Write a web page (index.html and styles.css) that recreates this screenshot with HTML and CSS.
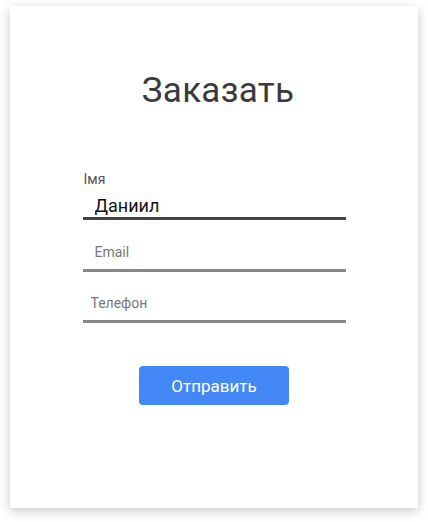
FILE: index.html
```html
<!DOCTYPE html>
<html lang="ru">
<head>
<meta charset="utf-8">
<title>Заказать</title>
<link rel="stylesheet" href="styles.css">
</head>
<body>
<main class="card">
  <h1 class="title">Заказать</h1>
  <form class="form">
    <label class="label" for="name">Імя</label>
    <input class="field field-active" id="name" type="text" value="Даниил">
    <input class="field field-email" type="email" placeholder="Email">
    <input class="field field-phone" type="tel" placeholder="Телефон">
    <div class="actions">
      <button class="submit" type="button">Отправить</button>
    </div>
  </form>
</main>
</body>
</html>
```

FILE: styles.css
```css
html, body {
  margin: 0;
  padding: 0;
  background: #fff;
}
body {
  font-family: Roboto, "Noto Sans", Arial, sans-serif;
  padding: 6px 10px 14px;
}
.card {
  box-sizing: border-box;
  width: 408px;
  height: 502px;
  background: #fff;
  box-shadow: 0 3px 10px rgba(0, 0, 0, 0.22);
  padding-top: 64px;
}
.title {
  margin: 0;
  padding-left: 8px;
  text-align: center;
  font-weight: 400;
  font-size: 35px;
  line-height: 41px;
  letter-spacing: 0.3px;
  color: #3a3a3a;
}
.form {
  width: 263px;
  margin: 60px auto 0;
}
.label {
  display: block;
  font-size: 14px;
  line-height: 16px;
  color: #555;
  padding-left: 1px;
}
.field {
  display: block;
  box-sizing: content-box;
  width: 251px;
  border: 0;
  border-bottom: 3px solid #888;
  outline: none;
  background: transparent;
  font-family: Roboto, "Noto Sans", Arial, sans-serif;
  margin: 0;
}
.field::placeholder {
  color: #777;
}
.field-active {
  margin-top: 8px;
  height: 20px;
  padding: 0 0 2px 12px;
  font-size: 18px;
  color: #111;
  border-bottom-color: #444;
}
.field-email {
  margin-top: 15px;
  height: 34px;
  padding: 0 0 0 12px;
  font-size: 14px;
}
.field-phone {
  margin-top: 14px;
  height: 34px;
  padding: 0 0 0 8px;
  width: 255px;
  font-size: 14px;
}
.actions {
  display: flex;
  justify-content: center;
  margin-top: 43px;
}
.submit {
  width: 150px;
  height: 39px;
  border: 0;
  border-radius: 4px;
  background: #4287f5;
  color: #fff;
  font-family: Roboto, "Noto Sans", Arial, sans-serif;
  font-size: 17px;
  padding: 0;
  cursor: pointer;
}
```
